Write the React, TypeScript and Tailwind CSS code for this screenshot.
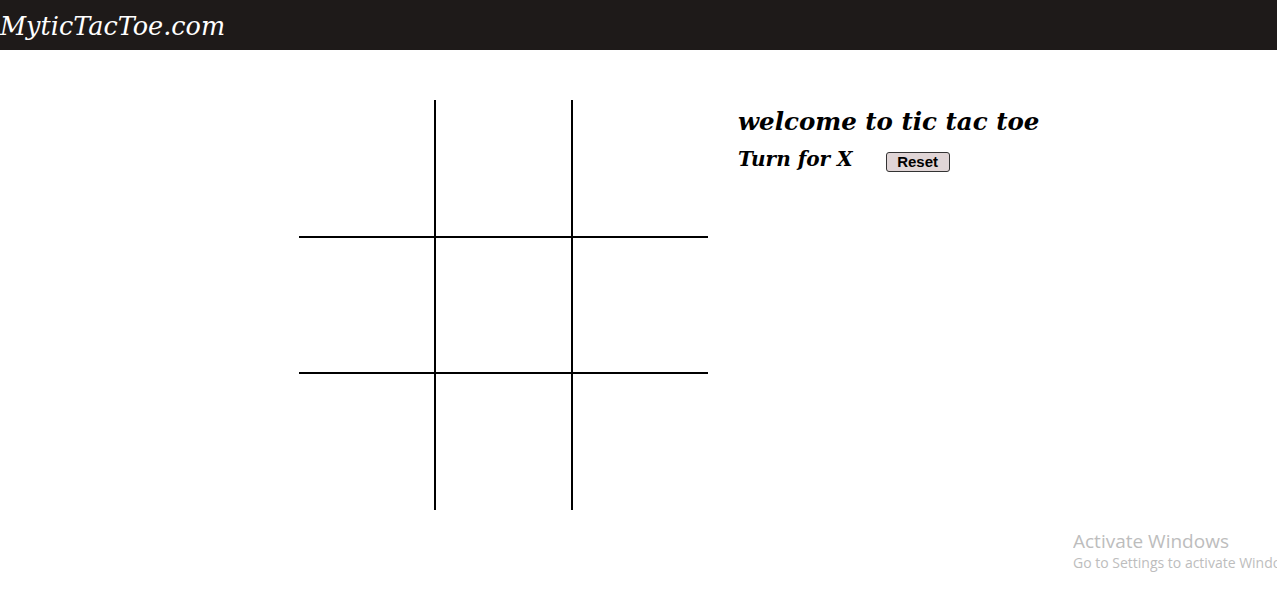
import React, { useState } from "react";

const serif = { fontFamily: '"DejaVu Serif", "Liberation Serif", serif' };

export default function App() {
  const [cells, setCells] = useState<string[]>(Array(9).fill(""));
  const [turn, setTurn] = useState("X");

  const play = (i: number) => {
    if (cells[i]) return;
    const next = [...cells];
    next[i] = turn;
    setCells(next);
    setTurn(turn === "X" ? "O" : "X");
  };

  const reset = () => {
    setCells(Array(9).fill(""));
    setTurn("X");
  };

  return (
    <div className="relative min-h-[606px] bg-white">
      <nav className="h-[50px] bg-[#1e1a19] flex items-center">
        <span className="text-white italic text-[25.5px] leading-none pt-[4px]" style={serif}>
          MyticTacToe.com
        </span>
      </nav>
      <div className="flex pl-[299px] pt-[50px] gap-[30px]">
        <div className="grid grid-cols-[137px_137px_135px] grid-rows-[138px_136px_136px] w-[409px]">
          {cells.map((c, i) => (
            <div
              key={i}
              onClick={() => play(i)}
              className={
                "flex items-center justify-center text-5xl cursor-pointer border-black " +
                (i % 3 !== 2 ? "border-r-2 " : "") +
                (i < 6 ? "border-b-2" : "")
              }
              style={serif}
            >
              {c}
            </div>
          ))}
        </div>
        <div className="pt-[7px]" style={serif}>
          <h1 className="text-[24.5px] font-bold italic leading-tight">welcome to tic tac toe</h1>
          <div className="flex items-center mt-[6px]">
            <span className="text-[20px] font-bold italic">Turn for {turn}</span>
            <button
              onClick={reset}
              className="ml-[33px] mt-[6px] h-[20px] w-[64px] bg-[#e0d5d6] border border-[#333] rounded-[3px] text-[15px] font-bold leading-none"
              style={{ fontFamily: '"Liberation Sans", Arial, sans-serif' }}
            >
              Reset
            </button>
          </div>
        </div>
      </div>
      <div
        className="absolute left-[1073px] top-[529px] text-[#bdbdbd] whitespace-nowrap overflow-hidden w-[204px]"
        style={{ fontFamily: '"Open Sans", "Noto Sans", sans-serif' }}
      >
        <div className="text-[19px] leading-[24px]">Activate Windows</div>
        <div className="text-[14px] leading-[20px]">Go to Settings to activate Windows.</div>
      </div>
    </div>
  );
}
